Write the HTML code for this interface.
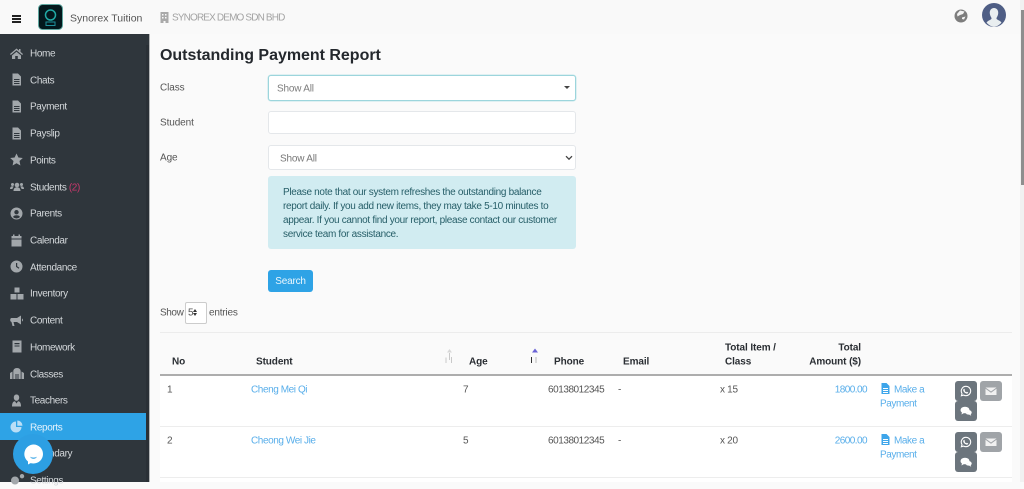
<!DOCTYPE html>
<html><head><meta charset="utf-8"><style>
html,body{margin:0;padding:0;width:1024px;height:482px;overflow:hidden;background:#fafafa;font-family:"Liberation Sans",sans-serif;font-size:10px;color:#555;-webkit-font-smoothing:antialiased}
.a{position:absolute;white-space:nowrap}
.t{position:absolute;white-space:nowrap;line-height:14px;letter-spacing:-.1px;transform:translateY(1.5px)}
.m{position:absolute;left:30px;color:#d4d8db;line-height:14px;font-size:10px;white-space:nowrap;letter-spacing:-.38px;transform:translateY(1.5px)}
.i{position:absolute;left:10px;width:13px;height:13px;fill:#a2a7ab}
.t.l{color:#58aeea;letter-spacing:-.42px}
.h{position:absolute;white-space:nowrap;font-weight:bold;color:#2a2e33;line-height:14px;font-size:10px;letter-spacing:-.1px;transform:translateY(1.5px)}
.b{position:absolute;width:22px;height:20px;border-radius:3px;background:#6c757d}
.b svg{position:absolute;left:5px;top:4px;width:12px;height:12px}
.box{position:absolute;box-sizing:border-box;background:#fff;border:1px solid #e4e7ea;border-radius:3px}
</style></head><body>
<!-- header -->
<div class="a" style="left:0;top:0;width:1024px;height:34px;background:#f9f9f9"></div>
<div class="a" style="left:12px;top:15px;width:8.500px;height:1.700px;background:#222;box-shadow:0 3px 0 #222,0 6px 0 #222"></div>
<svg class="a" style="left:38px;top:4px" width="25" height="26" viewBox="0 0 25 26"><rect x=".5" y=".5" width="24" height="25" rx="4" fill="#03181c" stroke="#5fa7a0"/><circle cx="12.5" cy="11" r="5" fill="none" stroke="#20a9a4" stroke-width="1.5"/><rect x="8" y="18" width="9" height="3.5" fill="none" stroke="#1f8f9a"/></svg>
<div class="t" style="left:70px;top:9.500px;font-size:10.500px;color:#555;letter-spacing:0">Synorex Tuition</div>
<svg class="a" style="left:160px;top:12px" width="9" height="11" viewBox="0 0 9 11"><path fill="#aaa" d="M.5 0h8v11H5.500V9h-2v2H.5zM2 2v1.500h1.500V2zM5 2v1.500h1.500V2zM2 5v1.500h1.500V5zM5 5v1.500h1.500V5z" fill-rule="evenodd"/></svg>
<div class="t" style="left:172px;top:9.500px;color:#a3a3a3;letter-spacing:-.85px">SYNOREX DEMO SDN BHD</div>
<svg class="a" style="left:954px;top:9px" width="14" height="14" viewBox="0 0 14 14"><circle cx="7" cy="7" r="6.500" fill="#7d7d7d"/><path fill="#f3f3f3" d="M6 1.500 10.500 2.500 9 5 6 6 3.500 7.500 3 5zM8 8.500 11.500 7.500 10 10.500 8 10z"/></svg>
<svg class="a" style="left:982px;top:3px" width="24" height="24" viewBox="0 0 24 24"><circle cx="12" cy="12" r="12" fill="#4f5e85"/><path fill="#e9eef0" d="M12 5c3 0 4.500 2.500 4.200 5.500-.2 2-1.200 3.500-1.700 4.500-.3 1 .5 1.500 3.500 3l1.500 1.500A12 12 0 0 1 12 24a12 12 0 0 1-7.500-4.500L6 18c3-1.500 3.800-2 3.500-3-.5-1-1.500-2.500-1.700-4.500C7.500 7.500 9 5 12 5z"/></svg>
<!-- sidebar -->
<div class="a" style="left:0;top:34px;width:149px;height:448px;background:#2f363c"></div>
<div class="a" style="left:149px;top:34px;width:1px;height:448px;background:#b5b7b8"></div>
<div class="a" style="left:146px;top:45px;width:3px;height:437px;background:#2a3036"></div>
<div class="a" style="left:0;top:413px;width:146px;height:27px;background:#2ea3e6"></div>

<svg class="i" style="top:47px" viewBox="0 0 13 13"><path d="M6.500 1.500 0 7l.8 1 5.700-4.800L12.200 8l.8-1-2.500-2.100V2H9v1.600zM2 8.500V12h3.200V9h2.600v3H11V8.500L6.500 4.700z"/></svg>
<div class="m" style="top:46px">Home</div>
<svg class="i" style="top:73px" viewBox="0 0 13 13"><path fill-rule="evenodd" d="M2.500 .5H8L11 3.500V12.500H2.500zM4 6V7H9.500V6zM4 8V9H9.500V8zM4 10V11H9.500V10z"/></svg>
<div class="m" style="top:73px">Chats</div>
<svg class="i" style="top:100px" viewBox="0 0 13 13"><path fill-rule="evenodd" d="M2.500 .5H8L11 3.500V12.500H2.500zM4 6V7H9.500V6zM4 8V9H9.500V8zM4 10V11H9.500V10z"/></svg>
<div class="m" style="top:99px">Payment</div>
<svg class="i" style="top:127px" viewBox="0 0 13 13"><path fill-rule="evenodd" d="M2.500 .5H8L11 3.500V12.500H2.500zM4 6V7H9.500V6zM4 8V9H9.500V8zM4 10V11H9.500V10z"/></svg>
<div class="m" style="top:126px">Payslip</div>
<svg class="i" style="top:153px" viewBox="0 0 13 13"><path d="M6.500 .5 8.400 4.500 12.800 5 9.500 8 10.400 12.500 6.500 10.300 2.600 12.500 3.500 8 .2 5 4.600 4.500z"/></svg>
<div class="m" style="top:153px">Points</div>
<svg class="i" style="top:180px;width:14px" viewBox="0 0 14 13"><circle cx="7" cy="5" r="2.300"/><circle cx="2.500" cy="4.500" r="1.500"/><circle cx="11.500" cy="4.500" r="1.500"/><path d="M3.500 11c0-2.500 1.500-3.700 3.500-3.700s3.500 1.200 3.500 3.700zM0 9c0-1.800 1-2.700 2.500-2.700.5 0 1 .2 1.300.5C3 7.500 2.600 8 2.500 9zM14 9c0-1.800-1-2.700-2.500-2.700-.5 0-1 .2-1.300.5.8.7 1.200 1.200 1.300 2.200z"/></svg>
<div class="m" style="top:180px">Students <span style="color:#c7386c">(2)</span></div>
<svg class="i" style="top:207px" viewBox="0 0 13 13"><path fill-rule="evenodd" d="M6.500 .5a6 6 0 1 0 0 12 6 6 0 0 0 0-12zM6.500 3a2.200 2.200 0 1 1 0 4.400 2.200 2.200 0 0 1 0-4.400zM3 10c.5-1.300 1.800-1.800 3.500-1.800S9.500 8.700 10 10a4.800 4.800 0 0 1-7 0z"/></svg>
<div class="m" style="top:206px">Parents</div>
<svg class="i" style="top:234px" viewBox="0 0 13 13"><path d="M3 .5h1.500V2h4V.5H10V2h1.500v2.500h-10V2H3zM1.500 5.500h10v7h-10z"/></svg>
<div class="m" style="top:233px">Calendar</div>
<svg class="i" style="top:260px" viewBox="0 0 13 13"><path fill-rule="evenodd" d="M6.500 .5a6 6 0 1 0 0 12 6 6 0 0 0 0-12zM6 3h1.200v3.200l2.200 1.600-.7 1L6 6.900z"/></svg>
<div class="m" style="top:260px">Attendance</div>
<svg class="i" style="top:287px;left:10px;width:14px" viewBox="0 0 14 13"><path d="M4.500 .5h5v5h-5zM.5 7h6v5.500h-6zM7.500 7h6v5.500h-6z"/></svg>
<div class="m" style="top:286px">Inventory</div>
<svg class="i" style="top:314px" viewBox="0 0 13 13"><path d="M11 1.500V10.500L7 8H3.500L4.500 12H2.500L1.500 8C.5 7.500 .2 7 .2 6S.7 4 1.500 4H7zM12 4.500c.6.300 1 .9 1 1.500s-.4 1.200-1 1.500z"/></svg>
<div class="m" style="top:313px">Content</div>
<svg class="i" style="top:340px" viewBox="0 0 13 13"><path fill-rule="evenodd" d="M2.500 .5H11.500V12.500H2.500zM4.500 3V4.200H9.500V3zM4.500 5.500V6.500H9.500V5.500z"/></svg>
<div class="m" style="top:340px">Homework</div>
<svg class="i" style="top:367px;width:14px" viewBox="0 0 14 13"><path fill-rule="evenodd" d="M7 1c2.500 0 3.700 1.500 3.700 3.500V12H3.300V4.500C3.300 2.500 4.500 1 7 1zM5.500 7V12H6.500V7zM7.500 7V12H8.500V7zM0 6 2.500 4.500V12H0zM14 6 11.500 4.500V12H14z"/></svg>
<div class="m" style="top:367px">Classes</div>
<svg class="i" style="top:394px" viewBox="0 0 13 13"><path d="M6.500 .5c1.700 0 2.700 1.300 2.700 3S8.200 6.800 6.500 6.800 3.800 5.200 3.800 3.500s1-3 2.700-3zM2 12.500c0-3.500 1-5 3-5.200l1.500 2.200L8 7.300c2 .2 3 1.700 3 5.200z"/></svg>
<div class="m" style="top:393px">Teachers</div>
<svg class="i" style="top:420px;fill:#b9def6" viewBox="0 0 13 13"><path d="M6 1.500A5.500 5.500 0 1 0 11.500 7H6zM7.300 .5V5.700H12.500A5.200 5.200 0 0 0 7.300 .5z"/></svg>
<div class="m" style="top:420px;color:#e3f2fc">Reports</div>
<div class="m" style="top:446px">Calendary</div>
<svg class="i" style="top:474px;width:15px" viewBox="0 0 15 13"><path d="M5 2.500a4 4 0 1 0 0 8 4 4 0 0 0 0-8zM12 0a2.200 2.200 0 1 0 0 4.400A2.200 2.200 0 0 0 12 0z"/></svg>
<div class="m" style="top:473px">Settings</div>
<!-- chat bubble -->
<div class="a" style="left:13px;top:434px;width:40px;height:40px;border-radius:50%;background:#2d9fe3"></div>
<svg class="a" style="left:23px;top:444px" width="21" height="21" viewBox="0 0 21 21"><path fill="#fff" d="M10.500 .5a9.500 9.500 0 0 1 0 19c-1 0-2-.1-2.900-.4L5 20.500V17.500A9.500 9.500 0 0 1 10.500 .5z"/><path d="M7 12.500c1 1.500 6 1.500 7 0-1 3-6 3-7 0z" fill="#2d9fe3"/></svg>

<!-- main -->
<div class="a" style="left:160px;top:45px;font-size:16px;line-height:21px;font-weight:bold;color:#24282d;letter-spacing:-.02px">Outstanding Payment Report</div>
<div class="t" style="left:160px;top:80px">Class</div>
<div class="t" style="left:160px;top:115px">Student</div>
<div class="t" style="left:160px;top:150px">Age</div>

<div class="box" style="left:268px;top:75px;width:308px;height:26px;border-color:#9cd5dc;box-shadow:0 0 0 .5px #c4e6ea"></div>
<div class="t" style="left:277px;top:81px;color:#7d7d7d;letter-spacing:-.2px">Show All</div>
<div class="a" style="left:564px;top:86px;width:0;height:0;border-left:3px solid transparent;border-right:3px solid transparent;border-top:3.500px solid #444"></div>
<div class="box" style="left:268px;top:111px;width:308px;height:23px"></div>
<div class="box" style="left:268px;top:145px;width:308px;height:25px"></div>
<div class="t" style="left:280px;top:151px;color:#777;letter-spacing:-.2px">Show All</div>
<svg class="a" style="left:565px;top:155px" width="8" height="6" viewBox="0 0 8 6"><path d="M1 1.200 4 4.200 7 1.200" fill="none" stroke="#444" stroke-width="1.300"/></svg>

<div class="a" style="left:268px;top:176px;width:308px;height:73px;background:#d1ecf1;border-radius:3px"></div>
<div class="a" style="left:283px;top:185.500px;width:290px;line-height:14px;color:#265e68;font-size:10px;letter-spacing:-.31px">Please note that our system refreshes the outstanding balance<br>report daily. If you add new items, they may take 5-10 minutes to<br>appear. If you cannot find your report, please contact our customer<br>service team for assistance.</div>

<div class="a" style="left:268px;top:270px;width:45px;height:22px;line-height:23px;text-align:center;background:#2ea3e6;border-radius:3px;color:#eaf6fd;font-size:10px;letter-spacing:-.2px">Search</div>

<div class="t" style="left:160px;top:305px;letter-spacing:-.4px">Show</div>
<div class="box" style="left:185px;top:302px;width:22px;height:22px;border-color:#ccc;border-radius:2px"></div>
<div class="t" style="left:188px;top:305px">5</div>
<div class="a" style="left:193px;top:309px;width:0;height:0;border-left:2.500px solid transparent;border-right:2.500px solid transparent;border-bottom:3px solid #333"></div>
<div class="a" style="left:193px;top:313px;width:0;height:0;border-left:2.500px solid transparent;border-right:2.500px solid transparent;border-top:3px solid #333"></div>
<div class="t" style="left:209px;top:305px;letter-spacing:-.2px">entries</div>

<!-- table -->
<div class="a" style="left:160px;top:332px;width:852px;height:1px;background:#ececec"></div>
<div class="a" style="left:160px;top:374px;width:852px;height:2px;background:#adadad"></div>
<div class="a" style="left:160px;top:376px;width:852px;height:106px;background:#fff"></div>
<div class="a" style="left:160px;top:426px;width:852px;height:1px;background:#ededed"></div>
<div class="a" style="left:160px;top:477px;width:852px;height:1px;background:#ededed"></div>

<div class="h" style="left:172px;top:354px">No</div>
<div class="h" style="left:256px;top:354px">Student</div>
<div class="h" style="left:469px;top:354px">Age</div>
<div class="h" style="left:554px;top:354px">Phone</div>
<div class="h" style="left:623px;top:354px">Email</div>
<div class="h" style="left:725px;top:340px">Total Item /</div>
<div class="h" style="left:725px;top:354px">Class</div>
<div class="h" style="left:790px;top:340px;width:71px;text-align:right">Total</div>
<div class="h" style="left:790px;top:354px;width:71px;text-align:right">Amount ($)</div>
<svg class="a" style="left:443px;top:348px" width="12" height="16" viewBox="0 0 12 16"><path d="M6.500 1 9 4.500H4z" fill="#d8d8d8"/><path d="M3 9.500V15M6.500 5V12" stroke="#c9c9c9" fill="none"/><path d="M8.500 9V15" stroke="#c9c9c9"/></svg>
<svg class="a" style="left:528px;top:348px" width="12" height="16" viewBox="0 0 12 16"><path d="M7 .5 10 4.500H4z" fill="#6a63d6"/><path d="M3.500 9V15" stroke="#333"/><path d="M8 9V15" stroke="#bbb"/></svg>

<!-- row 1 -->
<div class="t" style="left:167px;top:382px">1</div>
<div class="t l" style="left:251px;top:382px">Cheng Mei Qi</div>
<div class="t" style="left:463px;top:382px">7</div>
<div class="t" style="left:548px;top:382px;letter-spacing:-.45px">60138012345</div>
<div class="t" style="left:618px;top:382px">-</div>
<div class="t" style="left:720px;top:382px;letter-spacing:-.3px">x 15</div>
<div class="t l" style="left:810px;top:382px;width:57px;text-align:right;letter-spacing:-.55px">1800.00</div>
<svg class="a" style="left:881px;top:383px" width="9" height="11" viewBox="0 0 9 11"><path fill="#3da5ea" fill-rule="evenodd" d="M.5 0H5.500L8.500 3V11H.5zM2 5V6H7V5zM2 7V8H7V7zM2 9V10H7V9z"/></svg>
<div class="t l" style="left:894px;top:382px">Make a</div>
<div class="t l" style="left:880px;top:396px">Payment</div>
<!-- row 2 -->
<div class="t" style="left:167px;top:433px">2</div>
<div class="t l" style="left:251px;top:433px">Cheong Wei Jie</div>
<div class="t" style="left:463px;top:433px">5</div>
<div class="t" style="left:548px;top:433px;letter-spacing:-.45px">60138012345</div>
<div class="t" style="left:618px;top:433px">-</div>
<div class="t" style="left:720px;top:433px;letter-spacing:-.3px">x 20</div>
<div class="t l" style="left:810px;top:433px;width:57px;text-align:right;letter-spacing:-.55px">2600.00</div>
<svg class="a" style="left:881px;top:434px" width="9" height="11" viewBox="0 0 9 11"><path fill="#3da5ea" fill-rule="evenodd" d="M.5 0H5.500L8.500 3V11H.5zM2 5V6H7V5zM2 7V8H7V7zM2 9V10H7V9z"/></svg>
<div class="t l" style="left:894px;top:433px">Make a</div>
<div class="t l" style="left:880px;top:447px">Payment</div>

<!-- buttons row 1 -->
<div class="b" style="left:955px;top:381px"><svg viewBox="0 0 12 12"><path fill="none" stroke="#fff" stroke-width="1.100" d="M6 1.300a4.700 4.700 0 0 1 0 9.400c-.8 0-1.600-.2-2.300-.6l-2.300.6.600-2.200A4.700 4.700 0 0 1 6 1.300z"/><path fill="#fff" d="M4.300 3.800 5 5.200 4.600 5.800c.4.700 1 1.200 1.700 1.500l.6-.5 1.300.7c-.2 1-1.200 1.300-2 1-1.500-.5-2.600-1.600-3-3-.2-.7.500-1.700 1.100-1.700z"/></svg></div>
<div class="b" style="left:980px;top:381px;background:#a0a4a8"><svg viewBox="0 0 12 12"><path fill="#f1f1f1" d="M.5 2.500h11L6 6.500zM.5 3.800 6 7.800l5.500-4V10h-11z"/></svg></div>
<div class="b" style="left:955px;top:401px"><svg viewBox="0 0 12 12"><ellipse cx="5" cy="5" rx="4.500" ry="3.300" fill="#fff"/><path fill="#fff" d="M2 7 1.500 9.500 4 8zM8.500 5c2 .2 3.200 1.200 3.200 2.500 0 .8-.4 1.300-1 1.700l.5 1.600-2-1.200c-1.500.1-3-.3-3.700-1.300 2 0 3.500-1.300 3-3.300z"/></svg></div>
<!-- buttons row 2 -->
<div class="b" style="left:955px;top:432px"><svg viewBox="0 0 12 12"><path fill="none" stroke="#fff" stroke-width="1.100" d="M6 1.300a4.700 4.700 0 0 1 0 9.400c-.8 0-1.600-.2-2.300-.6l-2.300.6.600-2.200A4.700 4.700 0 0 1 6 1.300z"/><path fill="#fff" d="M4.300 3.800 5 5.200 4.600 5.800c.4.700 1 1.200 1.700 1.500l.6-.5 1.300.7c-.2 1-1.200 1.300-2 1-1.500-.5-2.600-1.600-3-3-.2-.7.500-1.700 1.100-1.700z"/></svg></div>
<div class="b" style="left:980px;top:432px;background:#a0a4a8"><svg viewBox="0 0 12 12"><path fill="#f1f1f1" d="M.5 2.500h11L6 6.500zM.5 3.800 6 7.800l5.500-4V10h-11z"/></svg></div>
<div class="b" style="left:955px;top:452px"><svg viewBox="0 0 12 12"><ellipse cx="5" cy="5" rx="4.500" ry="3.300" fill="#fff"/><path fill="#fff" d="M2 7 1.500 9.500 4 8zM8.500 5c2 .2 3.200 1.200 3.200 2.500 0 .8-.4 1.300-1 1.700l.5 1.600-2-1.200c-1.500.1-3-.3-3.700-1.300 2 0 3.500-1.300 3-3.300z"/></svg></div>

<!-- scrollbar -->
<div class="a" style="left:1020px;top:0;width:4px;height:482px;background:#f1f1f1"></div>
<div class="a" style="left:1021px;top:10px;width:3px;height:175px;background:#8e8e8e"></div>
</body></html>
